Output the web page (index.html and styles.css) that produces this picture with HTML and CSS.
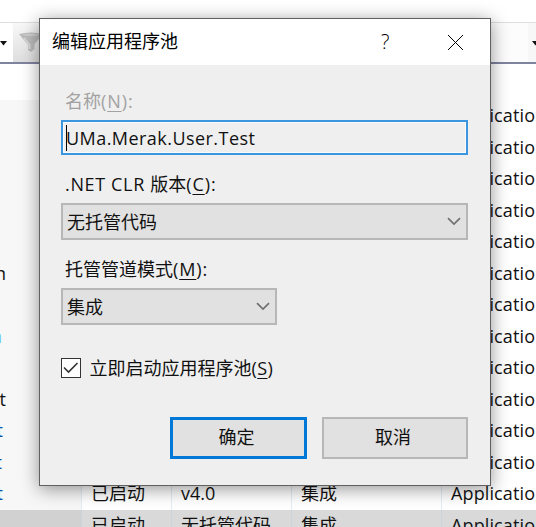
FILE: index.html
```html
<!DOCTYPE html>
<html lang="zh-CN">
<head>
<meta charset="utf-8">
<title>编辑应用程序池</title>
<link rel="stylesheet" href="styles.css">
</head>
<body>
<div class="window">
  <div class="strip"></div>
  <div class="toolbar">
    <div class="combo-end"><svg width="7" height="5" viewBox="0 0 7 5"><path d="M0 0h7L3.5 4.5z" fill="#111"/></svg></div>
    <div class="filter"><svg width="24" height="22" viewBox="0 0 24 22"><path d="M0 2Q12-1 24 2L15.5 12V17L12 20L9 18V13Z" fill="#bcbcbc"/><path d="M3 2.8Q12 0 21 2.8Q12 5.5 3 2.8Z" fill="#cfcfcf"/><path d="M5 6L10.500 13V17" fill="none" stroke="#d8d8d8" stroke-width="2"/></svg></div>
    <div class="fill"></div>
    <div class="combo-next"><svg width="7" height="5" viewBox="0 0 7 5"><path d="M0 0h7L3.5 4.5z" fill="#111"/></svg></div>
  </div>
  <div class="header"></div>
  <div class="grid">
    <div class="row"><span></span><span></span><span></span><span></span><span>Applicatio</span></div>
    <div class="row"><span></span><span></span><span></span><span></span><span>Applicatio</span></div>
    <div class="row"><span></span><span></span><span></span><span></span><span>Applicatio</span></div>
    <div class="row"><span></span><span></span><span></span><span></span><span>Applicatio</span></div>
    <div class="row"><span></span><span></span><span></span><span></span><span>Applicatio</span></div>
    <div class="row"><span><i class="end far">n</i></span><span></span><span></span><span></span><span>Applicatio</span></div>
    <div class="row"><span></span><span></span><span></span><span></span><span>Applicatio</span></div>
    <div class="row"><span><i class="end cut pale">n</i></span><span></span><span></span><span></span><span>Applicatio</span></div>
    <div class="row"><span></span><span></span><span></span><span></span><span>Applicatio</span></div>
    <div class="row"><span><i class="end far">t</i></span><span></span><span></span><span></span><span>Applicatio</span></div>
    <div class="row"><span><i class="end near blue">t</i></span><span></span><span></span><span></span><span>Applicatio</span></div>
    <div class="row"><span><i class="end cut blue">t</i></span><span></span><span></span><span></span><span>Applicatio</span></div>
    <div class="row"><span><i class="end near blue">t</i></span><span>已启动</span><span>v4.0</span><span>集成</span><span>Applicatio</span></div>
    <div class="row selected"><span></span><span>已启动</span><span>无托管代码</span><span>集成</span><span>Applicatio</span></div>
  </div>
</div>

<div class="dialog">
  <div class="titlebar">
    <div class="title">编辑应用程序池</div>
    <div class="help">?</div>
    <svg class="close" width="17" height="17" viewBox="0 0 17 17"><path d="M1 1L16 16M16 1L1 16" stroke="#000" stroke-width="1" fill="none"/></svg>
  </div>
  <div class="body">
    <div class="label name-label">名称<span class="key">(<u>N</u>):</span></div>
    <div class="textbox"><div class="caret"></div><span class="value">UMa.Merak.User.Test</span></div>
    <div class="label clr-label"><span class="clr">.NET CLR </span>版本<span class="key">(<u>C</u>):</span></div>
    <div class="select"><span>无托管代码</span><svg width="14" height="9" viewBox="0 0 14 9"><path d="M1 1.2L7 7L13 1.2" fill="none" stroke="#707070" stroke-width="1.7"/></svg></div>
    <div class="label mode-label">托管管道模式<span class="key">(<u>M</u>):</span></div>
    <div class="select short"><span>集成</span><svg width="14" height="9" viewBox="0 0 14 9"><path d="M1 1.2L7 7L13 1.2" fill="none" stroke="#707070" stroke-width="1.7"/></svg></div>
    <div class="check"><div class="box"><svg width="16" height="14" viewBox="0 0 16 14"><path d="M1 6.500L5.500 11L14.500 2" fill="none" stroke="#333" stroke-width="1.6"/></svg></div><span>立即启动应用程序池<span class="key">(<u>S</u>)</span></span></div>
    <div class="buttons"><div class="button primary">确定</div><div class="button">取消</div></div>
  </div>
</div>
</body>
</html>
```

FILE: styles.css
```css
* { box-sizing: border-box; }
body {
  margin: 0;
  width: 536px;
  height: 527px;
  overflow: hidden;
  position: relative;
  background: #fff;
  color: #111;
  font: 18px/24px "Open Sans", "Noto Sans CJK SC", sans-serif;
}
svg { display: block; flex: none; }
u { text-decoration-thickness: 1px; text-underline-offset: 3px; }

.window { height: 527px; overflow: hidden; }
.strip { height: 22px; }
.toolbar {
  display: flex;
  height: 42px;
  border-top: 1px solid #dedede;
  border-bottom: 2px solid #8083a0;
  background: #fcfcfc;
}
.combo-end { width: 13px; padding-top: 18px; background: #fff; }
.filter { width: 60px; padding: 9px 0 0 6px; background: linear-gradient(#f8f8f8, #dedede); }
.fill { flex: 1; }
.combo-next { width: 8px; padding: 18px 0 0 4px; background: #f7f7f7; overflow: hidden; }
.header { height: 36px; }

.row {
  display: grid;
  grid-template-columns: 81px 90px 120px 150px 95px;
  height: 31.5px;
  line-height: 31.5px;
  white-space: nowrap;
}
.row > span { padding-left: 9px; border-left: 1px solid #e3edf5; overflow: hidden; }
.row > span:last-child { letter-spacing: 0.12px; }
.row > span:first-child { padding: 0; border: 0; background: #f7f7f7; }
.row.selected > span { background: #d9d9d9; border-color: #cbd5dc; }
.row.selected > span:first-child { background: #d1d1d1; }
.end { display: block; width: 20px; text-align: right; font-style: normal; }
.far { margin-left: -14px; }
.near { margin-left: -17px; }
.cut { margin-left: -18px; }
.blue { color: #0754a8; }
.pale { color: #66c5ff; }

.dialog {
  position: absolute;
  left: 39px;
  top: 18px;
  width: 452px;
  height: 468px;
  border: 1px solid #606060;
  background: #efefef;
  box-shadow: 0 3px 17px rgba(0, 0, 0, .42);
}
.titlebar {
  display: flex;
  align-items: center;
  height: 46px;
  padding: 0 26px 0 12px;
  background: #fff;
  color: #000;
}
.title { flex: 1; line-height: 44px; margin-top: -2px; }
.help { width: 10px; margin-right: 56px; font-size: 20px; font-weight: 300; }
.body { padding: 24px 22px 0 21px; }
.label { height: 24px; padding-left: 4px; white-space: nowrap; }
.name-label { color: #a2a2a2; }
.key { letter-spacing: 0.9px; }
.textbox {
  display: flex;
  align-items: center;
  height: 35px;
  margin-top: 7px;
  padding-left: 3px;
  border: 2px solid #3b96df;
  box-shadow: inset 0 0 0 1px #fafafa;
}
.value { letter-spacing: 0.45px; }
.caret { width: 1px; height: 26px; margin-right: -1px; background: #000; }
.clr { letter-spacing: 0.65px; }
.clr-label { margin-top: 17px; }
.select {
  display: flex;
  align-items: center;
  justify-content: space-between;
  height: 37px;
  margin-top: 7px;
  padding: 0 5px 0 4px;
  border: 2px solid #b7b7b7;
  background: #e1e1e1;
}
.mode-label { margin-top: 17px; }
.short { width: 216px; }
.check { display: flex; align-items: center; height: 24px; margin-top: 31px; }
.check .key { letter-spacing: 0.4px; }
.box {
  width: 20px;
  height: 20px;
  margin-right: 8.5px;
  padding: 2px 1px;
  border: 1.5px solid #333;
  background: #fff;
}
.buttons { display: grid; grid-template-columns: 137px 146px; gap: 15px; justify-content: end; margin-top: 37px; }
.button {
  height: 42px;
  padding-right: 4px;
  line-height: 37px;
  border: 2px solid #b7b7b7;
  background: #e1e1e1;
  text-align: center;
}
.primary { border: 3px solid #0078d7; line-height: 35px; }
```
